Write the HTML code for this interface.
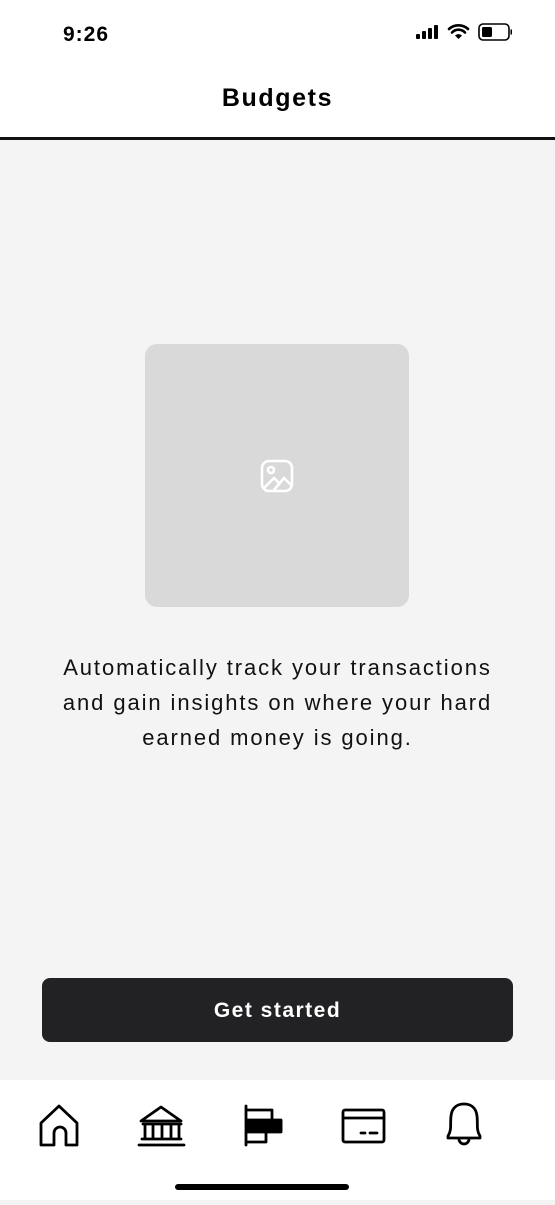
<!DOCTYPE html>
<html><head><meta charset="utf-8"><style>
*{margin:0;padding:0;box-sizing:border-box}
body{width:555px;height:1200px;background:#f4f4f4;font-family:"Liberation Sans",sans-serif;position:relative;overflow:hidden;color:#000}
.top{position:absolute;left:0;top:0;width:555px;height:140px;background:#fff;border-bottom:3px solid #111}
.time{position:absolute;left:63px;top:23px;font-size:21px;font-weight:bold;letter-spacing:1px}
.title{position:absolute;left:0;width:555px;top:84px;text-align:center;font-size:25px;font-weight:bold;letter-spacing:1.6px}
.ph{position:absolute;left:145px;top:344px;width:264px;height:263px;background:#d9d9d9;border-radius:12px}
.txt{position:absolute;left:0;width:555px;top:650px;text-align:center;font-size:22px;line-height:35px;color:#111;letter-spacing:1.9px}
.btn{position:absolute;left:42px;top:978px;width:471px;height:64px;background:#222224;border-radius:8px;color:#fff;font-size:21px;font-weight:bold;text-align:center;line-height:66px;letter-spacing:1.5px}
.nav{position:absolute;left:0;top:1080px;width:555px;height:120px;background:#fff}
.ind{position:absolute;left:175px;top:104px;width:174px;height:6px;border-radius:3px;background:#000}
</style></head><body>
<div class="top">
<div class="time">9:26</div>
<svg style="position:absolute;left:390px;top:20px" width="130" height="24" viewBox="390 20 130 24">
<rect x="416" y="34" width="4" height="5" rx="1"/><rect x="422" y="31" width="4" height="8" rx="1"/><rect x="428" y="28" width="4" height="11" rx="1"/><rect x="434" y="25" width="4" height="14" rx="1"/>
<path d="M449 29a14 14 0 0 1 19 0M452 32.5a9 9 0 0 1 13 0" stroke="#000" stroke-width="2.6" fill="none" stroke-linecap="round"/><path d="M455 35.5 458.5 39 462 35.5a5 5 0 0 0-7 0z"/>
<rect x="479" y="24" width="30" height="16" rx="4" fill="none" stroke="#000" stroke-width="1.6"/><rect x="482" y="27" width="10" height="10" rx="1.5"/><rect x="510.5" y="29.5" width="1.5" height="5"/>
</svg>
<div class="title">Budgets</div>
</div>
<div class="ph"><svg style="position:absolute;left:115px;top:115px" width="34" height="34" viewBox="0 0 34 34" fill="none" stroke="#fff" stroke-width="2.6" stroke-linejoin="round"><rect x="2" y="2" width="30" height="30" rx="7"/><circle cx="11" cy="11" r="3"/><path d="M4 29 14 19 20 25M14 31 24 19 32 27"/></svg></div>
<div class="txt">Automatically track your transactions<br>and gain insights on where your hard<br>earned money is going.</div>
<div class="btn">Get started</div>
<div class="nav">
<svg width="555" height="120" viewBox="0 1080 555 120" fill="none" stroke="#000" stroke-width="2.8" stroke-linejoin="round" stroke-linecap="round">
<path d="M41 1123 59 1106 77 1123V1145H66V1133A6 6 0 0 0 54 1133V1145H41Z"/>
<path d="M141 1121 161 1107 181 1121Z"/><path d="M143 1124H181M145 1124V1139M153 1124V1139M162 1124V1139M171 1124V1139M179 1124V1139M142 1139H181M139 1145H184"/>
<path d="M246 1106V1145M246 1110H272V1120M246 1120H281V1132H246M246 1132H266V1142H246"/><rect x="247" y="1121" width="34" height="10" fill="#000"/>
<rect x="343" y="1110" width="41" height="32" rx="2"/><path d="M343 1118H384M361 1133H365M370 1133H377"/>
<path d="M448 1136C452 1130 450 1124 451 1116 452 1107 458 1104 464 1104 470 1104 476 1107 477 1116 478 1124 476 1130 480 1136V1138H448ZM459 1139A5 5 0 0 0 469 1139"/>
</svg>
<div class="ind"></div>
</div>
</body></html>
